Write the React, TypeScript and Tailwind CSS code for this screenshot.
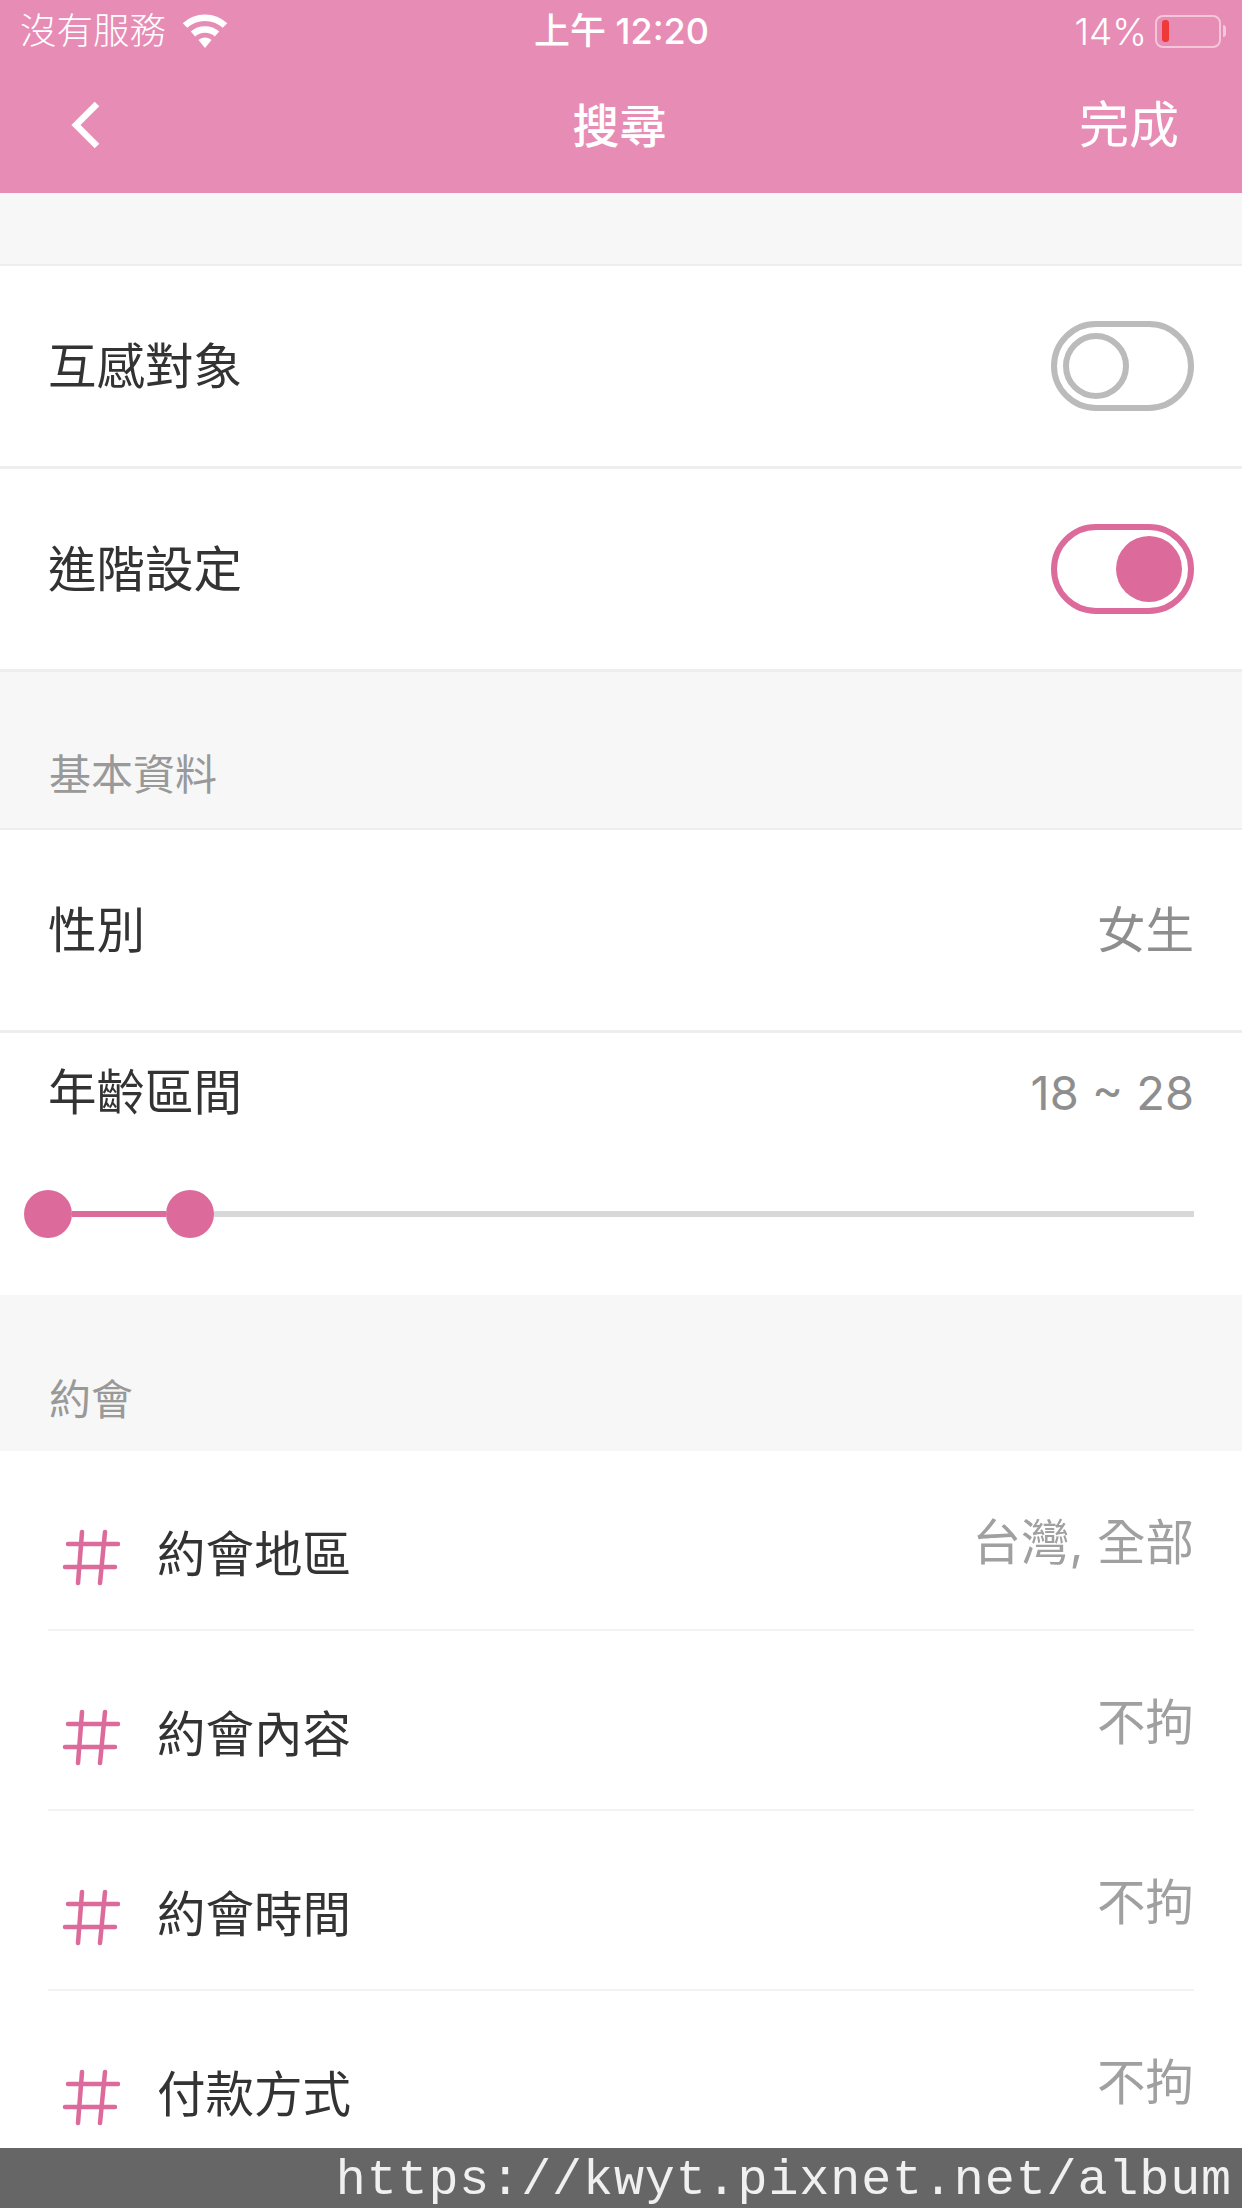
const font = "font-['Inter','Noto_Sans_CJK_TC',sans-serif]";

function Toggle({ on }: { on: boolean }) {
  return (
    <div
      className={`flex h-[90px] w-[143px] items-center rounded-full border-[6px] bg-white px-[6px] ${
        on ? "justify-end border-[#dc6a9b]" : "justify-start border-[#bbbbbb]"
      }`}
    >
      <div
        className={`h-[66px] w-[66px] rounded-full ${
          on ? "bg-[#dc6a9b]" : "border-[6px] border-[#bbbbbb] bg-white"
        }`}
      />
    </div>
  );
}

function Wifi() {
  return (
    <svg width="46" height="36" viewBox="0 0 46 36" fill="none">
      <path d="M3 12.5C14 2 32 2 43 12.5" stroke="#fff" strokeWidth="6.5" />
      <path d="M11 21C17.5 15 28.5 15 35 21" stroke="#fff" strokeWidth="6.5" />
      <path d="M16.5 27C20 23.5 26 23.5 29.5 27L23 35Z" fill="#fff" />
    </svg>
  );
}

function Hash() {
  return (
    <svg width="60" height="60" viewBox="0 0 60 60" fill="none" className="shrink-0">
      <g stroke="#dc6a9b" strokeWidth="4.5" strokeLinecap="round">
        <path d="M22 6L18 57M45 6L40 57M8 18H58M5 41H55" />
      </g>
    </svg>
  );
}

function Row({ label, value, right }: { label: string; value?: string; right?: React.ReactNode }) {
  return (
    <div className="flex h-[203px] items-center justify-between border-b-[3px] border-[#eeeeee] bg-white pl-[48px] pr-[48px]">
      <span className="pt-[2px] text-[48.5px] text-[#333333]">{label}</span>
      {value && <span className="pt-[2px] text-[48.5px] text-[#8e8e8e]">{value}</span>}
      {right}
    </div>
  );
}

function SectionTitle({ text, className }: { text: string; className: string }) {
  return (
    <div className={`flex items-end bg-[#f7f7f7] pl-[49px] text-[42px] leading-[60px] text-[#999999] ${className}`}>
      {text}
    </div>
  );
}

function DateRow({ label, value, last }: { label: string; value: string; last?: boolean }) {
  return (
    <div
      className={`mx-[48px] flex h-[180px] items-start justify-between ${
        last ? "" : "border-b-[2px] border-[#f2f2f2]"
      }`}
    >
      <div className="flex items-center pt-[73px]">
        <div className="ml-[12px] mr-[37px] mt-[2px] h-[60px] w-[60px]">
          <Hash />
        </div>
        <span className="text-[48.5px] leading-[60px] text-[#333333]">{label}</span>
      </div>
      <span className="pt-[62px] text-[48.5px] leading-[60px] text-[#a0a0a0]">{value}</span>
    </div>
  );
}

export default function App() {
  return (
    <div className={`flex h-[2208px] w-[1242px] flex-col overflow-hidden bg-white ${font}`}>
      <header className="h-[193px] shrink-0 bg-[#e78db5] text-white">
        <div className="flex h-[62px] items-center justify-between pl-[20px] pr-[16px]">
          <div className="flex w-[360px] items-center gap-[16px]">
            <span className="text-[36.5px] font-light leading-none">沒有服務</span>
            <Wifi />
          </div>
          <span className="-ml-[3px] text-[36px] font-medium leading-none">上午 12:20</span>
          <div className="flex w-[360px] items-center justify-end gap-[8px]">
            <span className="text-[37px] font-light leading-none">14%</span>
            <div className="flex items-center gap-[2px]">
              <div className="flex h-[33px] w-[66px] items-center rounded-[8px] border-2 border-white/50 pl-[5px]">
                <div className="h-[22px] w-[7px] rounded-[3px] bg-[#f03a3a]" />
              </div>
              <div className="h-[12px] w-[3px] rounded-r-full bg-white/50" />
            </div>
          </div>
        </div>
        <div className="grid h-[130px] grid-cols-3 items-center pb-[4px] pl-[71px] pr-[63px]">
          <svg width="30" height="48" viewBox="0 0 30 48" fill="none">
            <path d="M26 3L5 24L26 45" stroke="#fff" strokeWidth="6.5" />
          </svg>
          <span className="pr-[11px] text-center text-[47px] font-medium leading-none">搜尋</span>
          <span className="text-right text-[50px] leading-none">完成</span>
        </div>
      </header>

      <main className="flex-1 overflow-hidden bg-[#f7f7f7]">
        <div className="h-[73px] border-b-[2px] border-[#eeeeee]" />
        <Row label="互感對象" right={<Toggle on={false} />} />
        <Row label="進階設定" right={<Toggle on />} />
        <SectionTitle text="基本資料" className="h-[158px] border-b-[2px] border-[#eeeeee] pb-[23px]" />
        <Row label="性別" value="女生" />

        <section className="h-[262px] bg-white">
          <div className="flex items-center justify-between pl-[48px] pr-[48px] pt-[30px] text-[48.5px] leading-[60px]">
            <span className="text-[#333333]">年齡區間</span>
            <span className="text-[47px] text-[#8e8e8e]">18 ~ 28</span>
          </div>
          <div className="mt-[67px] flex items-center pl-[24px] pr-[48px]">
            <div className="h-[48px] w-[48px] rounded-full bg-[#dc6a9b]" />
            <div className="h-[6px] w-[94px] bg-[#dc6a9b]" />
            <div className="h-[48px] w-[48px] rounded-full bg-[#dc6a9b]" />
            <div className="h-[6px] flex-1 bg-[#d8d8d8]" />
          </div>
        </section>

        <SectionTitle text="約會" className="h-[156px] pb-[21px]" />

        <section className="bg-white">
          <DateRow label="約會地區" value="台灣, 全部" />
          <DateRow label="約會內容" value="不拘" />
          <DateRow label="約會時間" value="不拘" />
          <DateRow label="付款方式" value="不拘" last />
        </section>
      </main>

      <footer className="flex h-[60px] shrink-0 items-center justify-end bg-[#666666] pr-[10px] pt-[6px] font-['Liberation_Mono',monospace] text-[50px] leading-none tracking-[0.9px] text-[#f0f0f0]">
        https://kwyt.pixnet.net/album
      </footer>
    </div>
  );
}
